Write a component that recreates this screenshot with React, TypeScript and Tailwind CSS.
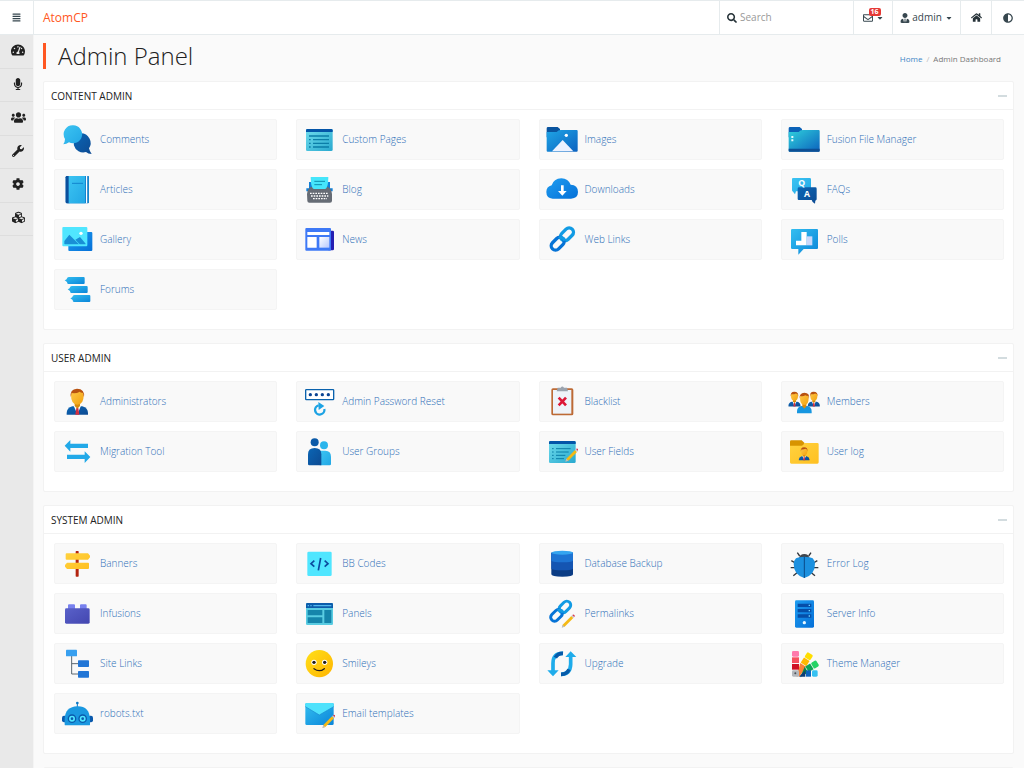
import type { ReactNode } from 'react';
import {
  FaAdjust,
  FaAlignJustify,
  FaCaretDown,
  FaCog,
  FaCubes,
  FaHome,
  FaMicrophone,
  FaRegEnvelope,
  FaSearch,
  FaTachometerAlt,
  FaUsers,
  FaUserTie,
  FaWrench,
} from 'react-icons/fa';

type Item = { label: string; art: ReactNode };
type Panel = { title: string; items: Item[] };

function Gradients() {
  const stops: [string, string, string][] = [
    ['sky', '#33bef0', '#0a85d9'],
    ['skySoft', '#3cc4f2', '#22a7e5'],
    ['navy', '#0b66b5', '#0d4a92'],
    ['azure', '#1f9df0', '#0570d8'],
    ['teal', '#6fdcec', '#29a9cf'],
    ['folder', '#1fa5e6', '#0b62c0'],
    ['fusion', '#2fd0dc', '#0c62bd'],
    ['gold', '#ffd23f', '#ffc021'],
    ['face', '#ffc94a', '#f2a20f'],
    ['smile', '#ffe01a', '#ffb400'],
    ['brick', '#5961c9', '#4346b0'],
    ['lilac', '#ffffff', '#b6c8ff'],
  ];
  return (
    <svg className="absolute size-0" aria-hidden="true">
      <defs>
        {stops.map(([id, from, to]) => (
          <linearGradient key={id} id={id} x1="0" y1="0" x2="1" y2="1">
            <stop offset="0" stopColor={from} />
            <stop offset="1" stopColor={to} />
          </linearGradient>
        ))}
      </defs>
    </svg>
  );
}

function Pencil() {
  return (
    <g>
      <path d="M50 80 76 54l6 6-26 26-8 2z" fill="#f5b914" />
      <path d="M50 80l6 6-9 3z" fill="#b9bcc4" />
      <path d="M76 54l3-3 6 6-3 3z" fill="#c5cbd3" />
      <path d="M79 51q3-3 6 0t0 6z" fill="#d8324a" />
    </g>
  );
}

function Person({ suit = 'url(#navy)' }: { suit?: string }) {
  return (
    <g>
      <path d="M17 86V81q0-15 17-20h30q17 5 17 20v5z" fill={suit} />
      <path d="M38 59h22l-11 26z" fill="#fff" />
      <path d="M46 66h6l3 20H43z" fill="#d32f3f" />
      <path d="M41 48h16v12l-8 8-8-8z" fill="#d98b0c" />
      <path d="M30 28q0-17 19-17t19 17q0 28-19 28T30 28z" fill="url(#face)" />
      <path d="M29 34q-3-25 19-26 24 0 21 26l-3-13q-8-2-10-4-10 6-24 4z" fill="#b85210" />
    </g>
  );
}

function Chain() {
  return (
    <g fill="none" strokeWidth="10">
      <rect x="-22" y="-13" width="44" height="26" rx="13" transform="translate(63 31) rotate(-45)" stroke="#119be4" />
      <rect x="-22" y="-13" width="44" height="26" rx="13" transform="translate(35 59) rotate(-45)" stroke="#0673d6" />
      <path d="M40 44q4-4 9-2 6 2 7 8" stroke="#119be4" />
    </g>
  );
}

const art = {
  comments: (
    <g>
      <path d="M60 28a29 29 0 0 1 24 45q2 9 8 17-11 0-17-6A29 29 0 1 1 60 28z" fill="url(#navy)" />
      <path d="M37 4a27 27 0 1 1-13 51q-8 6-17 6 5-8 5-16A27 27 0 0 1 37 4z" fill="url(#skySoft)" />
    </g>
  ),
  articles: (
    <g>
      <rect x="14" y="6" width="70" height="82" rx="4" fill="#0a6fc2" />
      <path d="M18 6h7v82h-7q-4 0-4-4V10q0-4 4-4z" fill="#0b4f9c" />
      <path d="M23 6h50v82H23z" fill="url(#skySoft)" />
      <path d="M75 6h4v82h-4z" fill="#fff" />
      <path d="M80 6q4 0 4 4v74q0 4-4 4z" fill="#1886cc" />
      <path d="M33 28h33" stroke="#1285ce" strokeWidth="3" />
    </g>
  ),
  gallery: (
    <g>
      <rect x="22" y="24" width="72" height="57" rx="3" fill="url(#azure)" />
      <rect x="4" y="9" width="75" height="58" rx="3" fill="#50e6ff" />
      <path d="M10 60V51l15-19 29 29H12zM43 47l14-8 17 20q0 2-2 2H56z" fill="#198fd6" />
      <circle cx="60" cy="28" r="5" fill="#fff" />
    </g>
  ),
  forums: (
    <g fill="url(#sky)">
      <path d="M11 19q6-1 8-8 1-2 5-2h44q3 0 3 3v15q0 3-3 3H22q-4 0-4-6z" />
      <path d="M20 46q6-1 8-8 1-2 5-2h44q3 0 3 3v15q0 3-3 3H31q-4 0-4-6z" />
      <path d="M28 73q6-1 8-8 1-2 5-2h44q3 0 3 3v15q0 3-3 3H39q-4 0-4-6z" />
    </g>
  ),
  pages: (
    <g>
      <rect x="9" y="15" width="80" height="66" rx="4" fill="url(#teal)" />
      <path d="M13 15h72q4 0 4 4v5H9v-5q0-4 4-4z" fill="#0455a8" />
      <path d="M18 36h60M30 47h48M30 58h48M30 69h48M18 47h5M18 58h5M18 69h5" stroke="#0b7ea8" strokeWidth="4" />
    </g>
  ),
  blog: (
    <g>
      <path d="M10 43h79v9H10zM18 24h63v28H18z" fill="#1180d8" />
      <path d="M12 60q2-20 15-22h45q13 2 15 22v20q0 6-6 6H19q-6 0-6-6z" fill="#666c75" />
      <path d="M23 9h53q0 31-9 36H32q-9-5-9-36z" fill="#46e6fb" />
      <path d="M34 22h32M34 32h23" stroke="#0f8fae" strokeWidth="3" />
      <path d="M21 58h56M24 66h52M30 74h42" stroke="#fff" strokeWidth="4" strokeDasharray="5 3" />
    </g>
  ),
  news: (
    <g>
      <path d="M80 20h9q4 0 4 4v51q0 4-4 4H76z" fill="#251fb2" />
      <rect x="7" y="12" width="77" height="68" rx="3" fill="#3e79f6" />
      <path d="M13 24h66v9H13zM13 39h28v32H13z" fill="#fff" />
      <path d="M49 39h30v32H49z" fill="url(#lilac)" />
    </g>
  ),
  images: (
    <g>
      <path d="M2 13q0-4 4-4h29l7 6v25H2z" fill="#0a549f" />
      <path d="M2 24h30q5-6 12-6h48q3 0 3 3v59q0 3-3 3H5q-3 0-3-3z" fill="url(#folder)" />
      <path d="M18 82l32-34 32 34z" fill="#edf2ff" />
      <circle cx="61" cy="34" r="5" fill="#fff" />
    </g>
  ),
  downloads: (
    <g>
      <path d="M20 74Q1 73 1 54q0-16 16-20 6-20 29-21 21 1 28 19 22 1 22 22 0 19-21 20z" fill="url(#azure)" />
      <path d="M45 34h8v17h9L49 65 36 51h9z" fill="#fff" />
    </g>
  ),
  weblinks: (
    <g>
      <Chain />
    </g>
  ),
  fusion: (
    <g>
      <path d="M2 13q0-4 4-4h29l7 6v25H2z" fill="#0b62b8" />
      <path d="M2 24h30q5-6 12-6h48q3 0 3 3v59q0 3-3 3H5q-3 0-3-3z" fill="url(#fusion)" />
      <path d="M2 74h93v6q0 3-3 3H5q-3 0-3-3z" fill="#0d4f94" />
      <path d="M10 36h6v6h-6zM10 46h6v6h-6z" fill="#e5fbff" />
    </g>
  ),
  faqs: (
    <g>
      <path d="M15 12h50q4 0 4 4v33q0 3-4 3H24l-3 9-6-8q-3-1-3-4V16q0-4 3-4z" fill="url(#skySoft)" />
      <path d="M33 40h49q4 0 4 4v32q0 3-4 4l-1 9q-8-2-10-11H32q-3 0-3-4V44q0-4 4-4z" fill="url(#navy)" />
      <g fill="#fff" fontSize="26" fontWeight="700" textAnchor="middle">
        <text x="41" y="37">
          Q
        </text>
        <text x="57" y="68">
          A
        </text>
      </g>
    </g>
  ),
  polls: (
    <g>
      <path d="M13 15h74q3 0 3 3v54q0 3-3 3H47L31 92V75H13q-4 0-4-3V18q0-3 4-3z" fill="url(#sky)" />
      <path d="M24 50h16V24h16v40H24z" fill="#fff" />
      <path d="M56 37h17v27H56z" fill="#c9d8fb" />
    </g>
  ),
  admin: <Person />,
  password: (
    <g>
      <rect x="8" y="11" width="84" height="30" rx="2" fill="#fff" stroke="#0a62ad" strokeWidth="4" />
      <g fill="#0b4493">
        <circle cx="22" cy="26" r="5" />
        <circle cx="40" cy="26" r="5" />
        <circle cx="58" cy="26" r="5" />
        <circle cx="76" cy="26" r="5" />
      </g>
      <path d="M47 58a14 14 0 1 0 17 11" fill="none" stroke="#1da3e4" strokeWidth="7" />
      <path d="M46 48l18 12-17 12z" fill="#1da3e4" />
    </g>
  ),
  blacklist: (
    <g>
      <rect x="16" y="7" width="66" height="81" rx="5" fill="#bd6a35" />
      <path d="M21 12h55v71H21z" fill="#eef3f9" />
      <path d="M35 5h9q5-7 10 0h9l3 11H32z" fill="#9aa3ae" />
      <path d="M38 35l22 23M60 35L38 58" stroke="#dc1737" strokeWidth="8" />
    </g>
  ),
  members: (
    <g>
      <g transform="translate(-8 13) scale(.56)">
        <Person />
      </g>
      <g transform="translate(50 13) scale(.56)">
        <Person />
      </g>
      <path d="M27 82v-5q0-14 12-17h20q12 3 12 17v5z" fill="#1696e0" />
      <path d="M43 53h12v8l-6 7-6-7z" fill="#d98b0c" />
      <path d="M36 36q0-13 13-13t13 13q0 21-13 21T36 36z" fill="url(#face)" />
      <path d="M35 38q-2-17 14-18 17 0 14 18l-2-8q-7 0-9-2-7 4-15 2z" fill="#b85210" />
    </g>
  ),
  migration: (
    <g fill="#22a9e8">
      <path d="M11 29L28 12v11h53v13H28v11zM88 63L71 46v10H18v13h53v12z" />
    </g>
  ),
  groups: (
    <g>
      <circle cx="63" cy="28" r="12" fill="#2ab5ec" />
      <path d="M50 44h17q17 0 17 18v22q0 4-4 4H50z" fill="url(#skySoft)" />
      <circle cx="35" cy="19" r="12" fill="#0b5aa8" />
      <path d="M15 55q0-19 20-19t20 19v33H19q-4 0-4-4z" fill="url(#navy)" />
    </g>
  ),
  fields: (
    <g>
      <rect x="9" y="15" width="80" height="66" rx="4" fill="url(#teal)" />
      <path d="M13 15h72q4 0 4 4v5H9v-5q0-4 4-4z" fill="#0455a8" />
      <path d="M30 38h44M30 48h38M30 58h28M30 68h24M18 38h5M18 48h5M18 58h5M18 68h5" stroke="#0b7ea8" strokeWidth="3" />
      <g transform="translate(11 -12)">
        <Pencil />
      </g>
    </g>
  ),
  userlog: (
    <g>
      <path d="M6 16q0-3 4-3h31l8 7v18H6z" fill="#d79300" />
      <path d="M6 29h35q5 0 8-8h39q4 0 4 4v54q0 4-4 4H10q-4 0-4-4z" fill="url(#gold)" />
      <g transform="translate(24 30) scale(.5)">
        <Person />
      </g>
    </g>
  ),
  banners: (
    <g>
      <rect x="44" y="9" width="9" height="77" rx="2" fill="#b32410" />
      <path d="M17 16h64l6 7v5l-6 7H17q-3 0-3-3V19q0-3 3-3zM81 44H18l-6 7v5l6 7h63q3 0 3-3V47q0-3-3-3z" fill="url(#gold)" />
    </g>
  ),
  infusions: (
    <g>
      <path d="M21 22q0-3 3-3h15q3 0 3 3v14H21zM57 22q0-3 3-3h14q3 0 3 3v14H57z" fill="#7881ee" />
      <rect x="12" y="31" width="74" height="46" rx="4" fill="url(#brick)" />
    </g>
  ),
  sitelinks: (
    <g>
      <path d="M32 22v56h22M32 47h22" fill="none" stroke="#5a6671" strokeWidth="3" />
      <rect x="15" y="5" width="33" height="20" rx="2" fill="#38a0f0" />
      <rect x="51" y="37" width="33" height="20" rx="2" fill="#2276d6" />
      <rect x="51" y="69" width="33" height="20" rx="2" fill="#2276d6" />
    </g>
  ),
  robots: (
    <g>
      <path d="M49 15v14" stroke="#0c78c4" strokeWidth="3" />
      <circle cx="49" cy="15" r="4" fill="#0c78c4" />
      <rect x="3" y="53" width="14" height="20" rx="6" fill="#0a5aad" />
      <rect x="82" y="53" width="14" height="20" rx="6" fill="#0a5aad" />
      <path d="M11 80V63q2-37 38-38t38 38v17q0 2-3 2H14q-3 0-3-2z" fill="#1a98e0" />
      <g fill="#50e6ff" stroke="#0a5aad" strokeWidth="4">
        <circle cx="33" cy="62" r="11" />
        <circle cx="65" cy="62" r="11" />
      </g>
      <circle cx="33" cy="62" r="4" fill="#0a5aad" />
      <circle cx="65" cy="62" r="4" fill="#0a5aad" />
    </g>
  ),
  bbcodes: (
    <g>
      <rect x="13" y="11" width="73" height="73" rx="4" fill="#50e6ff" />
      <path d="M34 38L24 47l10 9M65 38l10 9-10 9M53 30l-7 37" fill="none" stroke="#0b4b9e" strokeWidth="5" />
    </g>
  ),
  panels: (
    <g>
      <rect x="9" y="15" width="81" height="66" rx="4" fill="#59cce2" />
      <path d="M13 15h73q4 0 4 4v11H9V19q0-4 4-4z" fill="#0c5cab" />
      <path d="M14 21h4v4h-4zM22 21h4v4h-4zM31 21h54v4H31z" fill="#52b8ed" />
      <path d="M14 36h44v16H14zM14 58h44v17H14zM64 36h21v39H64z" fill="#1585ab" />
    </g>
  ),
  smileys: (
    <g>
      <circle cx="49" cy="47" r="41" fill="url(#smile)" />
      <circle cx="33" cy="43" r="8" fill="#fff" />
      <circle cx="65" cy="43" r="8" fill="#fff" />
      <circle cx="33" cy="43" r="5" fill="#211b1b" />
      <circle cx="65" cy="43" r="5" fill="#211b1b" />
      <path d="M33 62q16 12 31 0" fill="none" stroke="#241c1c" strokeWidth="4" strokeLinecap="round" />
    </g>
  ),
  email: (
    <g>
      <rect x="7" y="15" width="85" height="66" rx="4" fill="url(#sky)" />
      <path d="M11 15h77q4 0 4 4v7L49 51 7 26v-7q0-4 4-4z" fill="#4fe2fc" />
      <path d="M7 26l42 25 43-25" fill="none" stroke="#1a87cf" strokeWidth="2" />
      <g transform="translate(11 1)">
        <Pencil />
      </g>
    </g>
  ),
  database: (
    <g>
      <path d="M16 14v65q0 7 33 7t32-7V14z" fill="#0b3c84" />
      <path d="M16 14v48q6 5 33 5t32-5V14z" fill="#1555b2" />
      <path d="M16 14v24q6 5 33 5t32-5V14z" fill="#1e74d3" />
      <ellipse cx="49" cy="14" rx="32" ry="6" fill="#35a5f0" />
    </g>
  ),
  permalinks: (
    <g>
      <g transform="translate(0 -1) scale(.9)">
        <Chain />
      </g>
      <Pencil />
    </g>
  ),
  upgrade: (
    <g fill="none" strokeWidth="11">
      <path d="M51 16Q21 15 21 46v28" stroke="#1eaceb" />
      <path d="M51 16q-15-1-23 13" stroke="#075aa9" />
      <path d="M45 79q28-1 29-30V22" stroke="#1eaceb" />
      <path d="M45 79q18 0 24-15" stroke="#075aa9" />
      <path d="M4 67h34L21 85zM58 27h33L74 10z" fill="#1eaceb" stroke="none" />
    </g>
  ),
  errorlog: (
    <g>
      <path
        d="M35 24l-7-10M62 24l7-10M22 45l-12-7M76 45l12-7M23 59H8M75 59h16M27 74l-11 9M70 74l11 9"
        stroke="#30343a"
        strokeWidth="4"
      />
      <path d="M33 30q3-12 16-12t15 12z" fill="#41464d" />
      <path d="M49 90Q17 80 17 47q0-8 7-16 8-5 25-5t25 5q7 8 7 16 0 33-32 43z" fill="#1b90df" />
      <path d="M49 26v64" stroke="#0a4b88" strokeWidth="3" />
    </g>
  ),
  server: (
    <g>
      <rect x="21" y="7" width="57" height="82" rx="4" fill="url(#azure)" />
      <path d="M29 17h41v10H29zM29 33h41v10H29zM29 49h41v10H29z" fill="#064ea8" />
      <path d="M62 20h4v4h-4zM62 36h4v4h-4zM62 52h4v4h-4z" fill="#73d8ff" />
      <circle cx="49" cy="74" r="5" fill="#e9f8ff" />
    </g>
  ),
  theme: (
    <g>
      <g transform="rotate(33 30 80)">
        <rect x="17" y="7" width="20" height="18" rx="4" fill="#ffde00" />
        <path d="M17 27h20v18H17z" fill="#ffb900" />
        <path d="M17 47h20v34l-8 6z" fill="#fb8236" />
      </g>
      <g transform="rotate(59 33 84)">
        <rect x="18" y="16" width="20" height="18" rx="4" fill="#25d366" />
        <path d="M18 36h20v17H18z" fill="#10a356" />
        <path d="M18 55h20v28z" fill="#0d8044" />
      </g>
      <rect x="12" y="9" width="21" height="17" rx="4" fill="#ff7aac" />
      <path d="M12 28h21v17H12z" fill="#f7505f" />
      <path d="M12 48h21v17H12z" fill="#cf1124" />
      <rect x="12" y="67" width="21" height="19" rx="4" fill="#b4b8bd" />
      <path d="M33 86l19-19v19z" fill="#0a3c78" />
      <path d="M54 67h15v19H54z" fill="#0a62bd" />
      <rect x="72" y="67" width="17" height="19" rx="4" fill="#35c1f1" />
      <circle cx="22" cy="76" r="3" fill="#4c5157" />
    </g>
  ),
};

const panels: Panel[] = [
  {
    title: 'CONTENT ADMIN',
    items: [
      { label: 'Comments', art: art.comments },
      { label: 'Custom Pages', art: art.pages },
      { label: 'Images', art: art.images },
      { label: 'Fusion File Manager', art: art.fusion },
      { label: 'Articles', art: art.articles },
      { label: 'Blog', art: art.blog },
      { label: 'Downloads', art: art.downloads },
      { label: 'FAQs', art: art.faqs },
      { label: 'Gallery', art: art.gallery },
      { label: 'News', art: art.news },
      { label: 'Web Links', art: art.weblinks },
      { label: 'Polls', art: art.polls },
      { label: 'Forums', art: art.forums },
    ],
  },
  {
    title: 'USER ADMIN',
    items: [
      { label: 'Administrators', art: art.admin },
      { label: 'Admin Password Reset', art: art.password },
      { label: 'Blacklist', art: art.blacklist },
      { label: 'Members', art: art.members },
      { label: 'Migration Tool', art: art.migration },
      { label: 'User Groups', art: art.groups },
      { label: 'User Fields', art: art.fields },
      { label: 'User log', art: art.userlog },
    ],
  },
  {
    title: 'SYSTEM ADMIN',
    items: [
      { label: 'Banners', art: art.banners },
      { label: 'BB Codes', art: art.bbcodes },
      { label: 'Database Backup', art: art.database },
      { label: 'Error Log', art: art.errorlog },
      { label: 'Infusions', art: art.infusions },
      { label: 'Panels', art: art.panels },
      { label: 'Permalinks', art: art.permalinks },
      { label: 'Server Info', art: art.server },
      { label: 'Site Links', art: art.sitelinks },
      { label: 'Smileys', art: art.smileys },
      { label: 'Upgrade', art: art.upgrade },
      { label: 'Theme Manager', art: art.theme },
      { label: 'robots.txt', art: art.robots },
      { label: 'Email templates', art: art.email },
    ],
  },
];

const sections = [
  { name: 'Dashboard', icon: <FaTachometerAlt size={14} /> },
  { name: 'Content', icon: <FaMicrophone size={12} /> },
  { name: 'Users', icon: <FaUsers size={15} /> },
  { name: 'System', icon: <FaWrench size={12} /> },
  { name: 'Settings', icon: <FaCog size={12} /> },
  { name: 'Infusions', icon: <FaCubes size={13} /> },
];

function Header() {
  return (
    <header className="flex h-[35px] shrink-0 items-stretch border-y border-[#e6ebed] bg-white text-[#37474f]">
      <button aria-label="Toggle menu" className="flex w-[34px] items-center justify-center border-r border-[#e6ebed]">
        <FaAlignJustify size={9} />
      </button>
      <a href="#home" className="flex items-center pl-[9px] text-[12px] font-medium text-[#ff5722]">
        AtomCP
      </a>
      <label className="ml-auto flex w-[134px] items-center gap-[3px] border-l border-[#e6ebed] pl-[7px]">
        <FaSearch size={10} className="shrink-0 text-[#263238]" />
        <input
          type="text"
          aria-label="Search"
          placeholder="Search"
          className="w-full min-w-0 bg-transparent text-[10px] outline-none placeholder:text-[#999999]"
        />
      </label>
      <button aria-label="Messages" className="flex w-[39px] items-center justify-center gap-[3px] border-l border-[#e6ebed]">
        <span className="relative">
          <FaRegEnvelope size={10} />
          <span className="absolute -top-[5px] left-[6px] rounded-[2px] bg-[#e53935] px-[2px] text-[7px] leading-[8px] font-bold text-white">
            16
          </span>
        </span>
        <FaCaretDown size={8} />
      </button>
      <button className="flex w-[68px] items-center justify-center gap-[2px] border-l border-[#e6ebed] text-[10px]">
        <FaUserTie size={10} />
        admin
        <FaCaretDown size={8} className="ml-[1px]" />
      </button>
      <a href="#site" aria-label="Home" className="flex w-[31px] items-center justify-center border-l border-[#e6ebed] text-[#263238]">
        <FaHome size={11} />
      </a>
      <button aria-label="Contrast" className="flex w-[33px] items-center justify-center border-l border-[#e6ebed]">
        <FaAdjust size={10} />
      </button>
    </header>
  );
}

function PanelCard({ title, items }: Panel) {
  return (
    <section className="mb-[13px] rounded-[2px] border border-[#f2f2f2] bg-white">
      <div className="flex h-7 items-center justify-between border-b border-[#f2f2f2] pt-[2px] pr-[6px] pl-[7px]">
        <h2 className="text-[10px] text-[#212121]">{title}</h2>
        <button aria-label={'Collapse ' + title} className="flex h-3 items-center pb-[2px]">
          <span className="h-[2px] w-[9px] bg-[#d3dcdf]" />
        </button>
      </div>
      <ul className="grid grid-cols-4 gap-x-[19px] gap-y-[9px] pt-[9px] pr-[9px] pb-[19px] pl-[10px]">
        {items.map((item) => (
          <li key={item.label}>
            <a
              href="#open"
              className="flex h-[41px] items-center gap-[7px] rounded-[2px] border border-[#f4f4f4] bg-[#f9f9f9] pt-[1px] pl-[6px] text-[10px] font-light text-[#2f6fb8]"
            >
              <svg viewBox="0 0 96 96" className="size-8 shrink-0" aria-hidden="true">
                {item.art}
              </svg>
              <span className="pb-[2px]">{item.label}</span>
            </a>
          </li>
        ))}
      </ul>
    </section>
  );
}

export default function App() {
  return (
    <div className="flex h-screen flex-col overflow-hidden bg-[#fafafa] font-['Open_Sans',sans-serif]">
      <Gradients />
      <Header />
      <div className="flex min-h-0 flex-1">
        <nav className="w-[34px] shrink-0 border-r border-[#f4f4f4] bg-[#e9e9e9]">
          <ul className="grid h-[201px] auto-rows-fr text-[#212121]">
            {sections.map((s) => (
              <li key={s.name} className="flex border-b border-[#dedede]">
                <a href="#section" aria-label={s.name} className="flex flex-1 items-center justify-center pb-[2px] pl-[3px]">
                  {s.icon}
                </a>
              </li>
            ))}
          </ul>
        </nav>
        <main className="min-w-0 flex-1 pr-[10px] pl-[9px]">
          <div className="flex h-[46px] items-center justify-between pt-[7px] pr-[13px] pb-3">
            <h1 className="flex h-[26px] items-center border-l-[3px] border-[#ff5722] pl-3 text-[24px] font-light text-[#212121]">
              Admin Panel
            </h1>
            <nav aria-label="Breadcrumb" className="flex gap-1 pt-[6px] text-[8px] text-[#777777]">
              <a href="#home" className="text-[#3d85c6]">
                Home
              </a>
              <span className="text-[#bbbbbb]">/</span>
              <span>Admin Dashboard</span>
            </nav>
          </div>
          {panels.map((p) => (
            <PanelCard key={p.title} {...p} />
          ))}
          <section className="h-7 rounded-[2px] border border-[#f2f2f2] bg-white" />
        </main>
      </div>
    </div>
  );
}
